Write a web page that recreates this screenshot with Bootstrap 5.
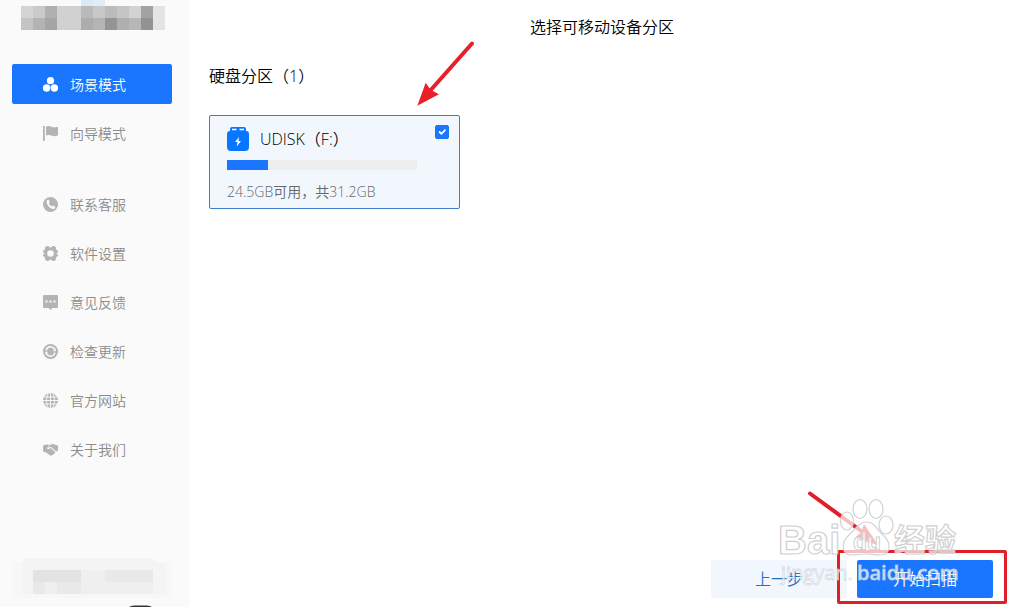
<!DOCTYPE html>
<html lang="zh-CN">
<head>
<meta charset="utf-8">
<meta name="viewport" content="width=device-width, initial-scale=1">
<title>选择可移动设备分区</title>
<link href="https://cdn.jsdelivr.net/npm/bootstrap@5.3.0/dist/css/bootstrap.min.css" rel="stylesheet">
<style>
  body { font-family: "Open Sans", "Noto Sans CJK SC", sans-serif; font-size: 16px; font-weight: 350; line-height: 24px; color: #000; background: #fff; }
  .sidebar { width: 189px; background: #fafafa; padding: 0 17px 0 12px; }
  .side-link { height: 40px; padding: 1px 0 0 31px; gap: 12px; font-size: 14px; line-height: 20px; color: #8c8c8c; border-radius: 2px; text-decoration: none; }
  .side-link svg { width: 15px; height: 15px; fill: #b3b5b4; flex: none; }
  .side-link.active { background: #1a76ff; color: #fff; }
  .side-link.active svg { fill: #fff; }
  .side-nav { gap: 9px; margin-top: 34px; }
  .side-group { margin-top: 22px; }
  .content { padding: 15px 20px 9px; }
  .page-title, .group-title { font-size: 16px; line-height: 24px; font-weight: 350; margin: 0; }
  .group-title { margin: 25px 0 27px; }
  .disk { width: 251px; padding: 11px 10px 6px 17px; background: #f2f7fe; border: 1px solid #3b7fc9; border-radius: 2px; }
  .disk .form-check-input { width: 14px; height: 14px; margin: -2px 0 0; border-radius: 2px; }
  .disk .form-check-input:checked { background-color: #1a76ff; border-color: #1a76ff; }
  .disk .progress { width: 190px; height: 10px; margin: 9px 0 12px; border-radius: 0; background: #eee; }
  .disk .progress-bar { background: #1a76ff; }
  .disk-name { padding-left: 11px; }
  .disk-size { font-size: 14px; line-height: 20px; color: #65676a; }
  .disk-arrow { right: -15px; bottom: 101px; }
  .steps { gap: 10px; padding-right: 2px; }
  .step-btn { width: 136px; height: 38px; padding: 0; border: 0; border-radius: 2px; font-size: 16px; font-weight: 350; }
  .step-prev, .step-prev:hover { background: #f2f7fe; color: #2a6fbe; }
  .step-next, .step-next:hover { background: #1a76ff; color: #fff; }
  .ring { inset: -10px -14px -6px -20px; border: 3px solid #e01f2b; border-radius: 2px; pointer-events: none; }
  .overlay { right: 0; bottom: 0; pointer-events: none; }
</style>
</head>
<body>
<div class="d-flex min-vh-100">
  <aside class="sidebar d-flex flex-column flex-shrink-0">
    <svg class="d-block" width="160" height="30" viewBox="12 0 160 30" shape-rendering="crispEdges" aria-hidden="true">
      <path fill="#dce9f8" d="M81 0h12v6H81z"/><path fill="#e3edf8" d="M93 0h12v6H93z"/>
      <path fill="#d4d4d4" d="M21 6h12v12H21z"/><path fill="#cacaca" d="M33 6h12v12H33z"/><path fill="#b0b0b0" d="M45 6h12v12H45z"/><path fill="#d1d1d1" d="M57 6h24v24H57z"/><path fill="#bababa" d="M81 6h12v12H81z"/><path fill="#c8c8c8" d="M93 6h12v12H93z"/><path fill="#bbb" d="M105 6h12v12h-12z"/><path fill="#c5c5c5" d="M117 6h12v12h-12z"/><path fill="#d3d3d3" d="M129 6h12v12h-12z"/><path fill="#a2a2a2" d="M141 6h12v12h-12z"/><path fill="#e4e4e4" d="M153 6h12v24h-12z"/>
      <path fill="#c4c4c4" d="M21 18h12v12H21z"/><path fill="#b3b3b3" d="M33 18h12v12H33z"/><path fill="#a5a5a5" d="M45 18h12v12H45z"/><path fill="#adadad" d="M81 18h12v12H81z"/><path fill="#b4b4b4" d="M93 18h12v12H93z"/><path fill="#949494" d="M105 18h12v12h-12z"/><path fill="#afafaf" d="M117 18h12v12h-12z"/><path fill="#b7b7b7" d="M129 18h12v12h-12z"/><path fill="#929292" d="M141 18h12v12h-12z"/>
    </svg>
    <nav class="side-nav d-flex flex-column">
      <a href="#" class="side-link active d-flex align-items-center" aria-current="page">
        <svg viewBox="0 0 15 15"><circle cx="7.5" cy="3.7" r="3.6"/><circle cx="3.6" cy="11" r="3.7"/><circle cx="11.4" cy="11" r="3.7"/></svg>场景模式</a>
      <a href="#" class="side-link d-flex align-items-center">
        <svg viewBox="0 0 15 15"><path d="M0 0h1.800v15H0zM3 .8c2-1.200 4-.8 5.500 0s4 .8 6.500-.3v8.800c-2.500 1.200-4.500 1-6.500.2S5 8.700 3 9.500z"/></svg>向导模式</a>
      <a href="#" class="side-link side-group d-flex align-items-center">
        <svg viewBox="0 0 15 15"><circle cx="7.500" cy="7.500" r="7.500"/><path fill="#fafafa" d="M4.300 3l1.300-.3 1.200 2.600-1 1c.5 1.400 1.500 2.500 3 3.200l1-1 2.500 1.300-.4 1.600c-1.300 1.100-3.800.3-5.700-1.400C4 8 3 4.600 4.300 3z"/></svg>联系客服</a>
      <a href="#" class="side-link d-flex align-items-center">
        <svg viewBox="0 0 15 15"><path fill-rule="evenodd" d="M4 0h1.500q.8 1.500 2 1.500t2-1.500H11l2 1.200q-.8 2.800 2 3.800v1.200q-1.300.3-1.300 1.300T15 8.800V10q-2.800 1-2 3.800L11 15H9.500q-.8-1.500-2-1.500t-2 1.500H4l-2-1.200Q2.800 11 0 10V8.800q1.300-.3 1.300-1.300T0 6.200V5q2.800-1 2-3.800zM7.500 4.200a3.300 3.300 0 1 0 0 6.600 3.300 3.300 0 0 0 0-6.600z"/></svg>软件设置</a>
      <a href="#" class="side-link d-flex align-items-center">
        <svg viewBox="0 0 15 15"><path fill-rule="evenodd" d="M1 0h13q1 0 1 1v11q0 1-1 1H9.500l-2 2-2-2H1q-1 0-1-1V1q0-1 1-1zM2.500 5.500v2h2v-2zm4 0v2h2v-2zm4 0v2h2v-2z"/></svg>意见反馈</a>
      <a href="#" class="side-link d-flex align-items-center">
        <svg viewBox="0 0 15 15"><circle cx="7.500" cy="7.500" r="7.500"/><path fill="none" stroke="#fafafa" stroke-width="1.500" d="M3.200 6.500a4.400 4.400 0 0 1 8.300-1.200M11.800 8.500a4.400 4.400 0 0 1-8.300 1.200"/><path fill="#fafafa" d="M12.700 4v3.200H9.800zM2.300 11V7.800h2.900z"/><circle cx="7.500" cy="7.500" r="2.600"/></svg>检查更新</a>
      <a href="#" class="side-link d-flex align-items-center">
        <svg viewBox="0 0 15 15"><circle cx="7.500" cy="7.500" r="7.500"/><path fill="none" stroke="#fafafa" stroke-width=".9" d="M7.500 0v15M0 7.500h15M1 4h13M1 11h13M5.500 0c-2.600 4-2.600 11 0 15M9.500 0c2.600 4 2.600 11 0 15"/></svg>官方网站</a>
      <a href="#" class="side-link d-flex align-items-center">
        <svg viewBox="0 0 15 15"><path d="M0 3.500l3-1 3.500.2L4 6.200c.8 1.400 2.300 1 3.500-.4l5 4.600-1.200 1.400-1 .8-1.300.7-1.500.5L3 10.500 0 9.500z"/><path d="M7.500 2.500L10 2l2.200.8L15 3.500v5.300l-1.800.7-5.500-4.800-2 1.100L5.300 5z"/></svg>关于我们</a>
    </nav>
    <svg class="d-block mt-auto" width="160" height="49" viewBox="12 558 160 49" aria-hidden="true">
      <path fill="#f7f7f7" d="M12 562h160v36H12z"/><path fill="#f4f4f4" d="M26 558h124l15 7v29H22v-31z"/>
      <g shape-rendering="crispEdges"><path fill="#efefef" d="M33 570h120v24H33z"/><path fill="#e3e3e3" d="M33 570h48v12H33z"/><path fill="#e9e9e9" d="M33 582h12v12H33zM57 582h24v12H57zM105 570h48v12h-48z"/></g>
      <path fill="#393536" d="M129 607q2-1.500 5-1.500h13q3 0 5 1.500z"/>
    </svg>
  </aside>

  <main class="content flex-grow-1 d-flex flex-column position-relative">
    <h1 class="page-title text-center">选择可移动设备分区</h1>
    <h2 class="group-title">硬盘分区（1）</h2>
    <div class="disk position-relative">
      <div class="d-flex align-items-center">
        <svg width="22" height="24" viewBox="0 0 22 24" aria-hidden="true"><path fill="#0877ff" d="M5 0h12q2 0 2 2v2q3 0 3 3v13q0 4-4 4H4q-4 0-4-4V7q0-3 3-3V2q0-2 2-2z"/><path stroke="#fff" stroke-width="1.500" d="M5 2.500h4.500M12.500 2.500H17"/><path fill="#fff" d="M12 10l-4 5h2.500l-.7 4.500L14 14h-2.500z"/></svg>
        <label for="udisk" class="disk-name flex-grow-1">UDISK（F:）</label>
        <input class="form-check-input align-self-start" type="checkbox" id="udisk" checked>
      </div>
      <div class="progress" role="progressbar" aria-label="已用空间" aria-valuenow="21" aria-valuemin="0" aria-valuemax="100"><div class="progress-bar" style="width: 21.5%"></div></div>
      <div class="disk-size">24.5GB可用，共31.2GB</div>
      <svg class="disk-arrow position-absolute" width="58" height="66" viewBox="416 41 58 66" aria-hidden="true"><path stroke="#e9202a" stroke-width="4" stroke-linecap="round" d="M472 43.500L429 92"/><path fill="#e9202a" d="M417.300 105.700l8.400-23 4.800 7 8.500 4.600z"/></svg>
    </div>

    <div class="steps d-flex justify-content-end mt-auto">
      <button type="button" class="btn step-btn step-prev">上一步</button>
      <div class="position-relative">
        <button type="button" class="btn step-btn step-next">开始扫描</button>
        <span class="ring position-absolute"></span>
      </div>
    </div>

    <svg class="overlay position-absolute" width="245" height="122" viewBox="770 485 245 122" aria-hidden="true">
      <path stroke="#e01f2b" stroke-width="4" stroke-linecap="round" d="M810 493.500L864 533"/>
      <path fill="#e01f2b" d="M878 545l-14-21-2.500 8-7 6z"/>
      <g fill="#fff" fill-opacity=".7" stroke="#d2d2d2" stroke-width="1.200">
        <ellipse cx="860" cy="509" rx="7" ry="9.500"/><ellipse cx="876" cy="509" rx="7" ry="9.500"/><ellipse cx="847" cy="521" rx="6.500" ry="9"/><ellipse cx="886" cy="525" rx="7" ry="9"/>
        <path d="M867 522c8 0 10 8 16 13 9 8 8 20-3 20-6 0-9-1-14-1s-9 1-14 1c-11 0-11-13-3-20 6-5 9-13 18-13z"/>
      </g>
      <g font-family="'Liberation Sans', 'Noto Sans CJK SC', sans-serif" font-weight="700" fill="#fff" fill-opacity=".7" stroke="#d0d0d0" stroke-width="1.200">
        <text x="778" y="554" font-size="40">Bai</text>
        <text x="853" y="550" font-size="23" stroke-width="1">du</text>
        <text x="894" y="551" font-size="31">经验</text>
      </g>
      <g font-family="'Open Sans', sans-serif" font-size="20" fill="#fff" fill-opacity=".75" stroke="#c8ccd2" stroke-opacity=".7" stroke-width=".8">
        <text x="781" y="580" font-weight="400">jingyan.</text>
        <text x="857" y="580" font-weight="600">baidu.com</text>
      </g>
    </svg>
  </main>
</div>
<script src="https://cdn.jsdelivr.net/npm/bootstrap@5.3.0/dist/js/bootstrap.bundle.min.js"></script>
</body>
</html>
